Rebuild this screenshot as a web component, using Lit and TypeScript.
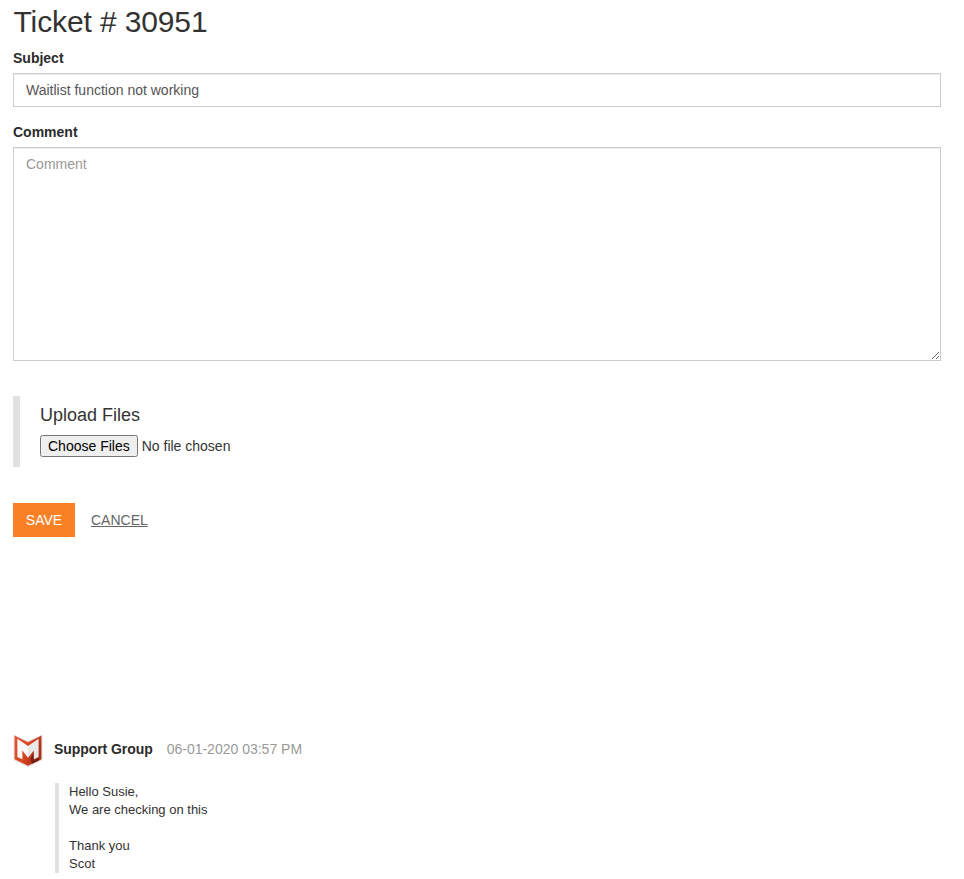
import { LitElement, html, css } from "lit";
import { customElement } from "lit/decorators.js";

@customElement("app-root")
export class AppRoot extends LitElement {
  static styles = css`
    :host { display: block; box-sizing: border-box; height: 879px; overflow: hidden; padding: 5px 23px 0 13px; background: #fff; color: #333; font: 14px/20px "Liberation Sans", Arial, sans-serif; }
    * { box-sizing: border-box; }
    h1 { margin: 0 0 10px; padding-left: 0.5px; font-size: 30px; line-height: 33px; font-weight: 400; letter-spacing: -0.12px; }
    label { display: block; font-weight: 700; margin-bottom: 5px; color: #2b2b2b; }
    .control { display: block; width: 100%; margin: 0 0 15px; padding: 6px 12px; border: 1px solid #ccc; border-radius: 0; font: inherit; color: #555; box-shadow: inset 0 1px 1px rgba(0,0,0,.075); outline: none; }
    input.control { height: 34px; }
    textarea.control { height: 214px; margin-bottom: 35px; resize: both; }
    .control::placeholder { color: #999; opacity: 1; }
    .upload { height: 71px; border-left: 7px solid #e1e1e1; padding: 9px 0 0 20px; margin-bottom: 36px; }
    .upload h4 { margin: 0 0 10px; font-size: 18px; line-height: 20px; font-weight: 400; }
    .upload input { display: block; font: inherit; height: 22px; }
    .actions { display: flex; align-items: center; gap: 16px; height: 34px; margin-bottom: 197px; }
    .save { width: 62px; height: 34px; border: 0; padding: 0; background: #f98025; color: #fff; font: inherit; }
    .cancel { color: #666; text-decoration: underline; }
    .head { display: flex; align-items: flex-start; height: 33px; margin-bottom: 16px; line-height: 30px; }
    .logo { width: 30px; height: 33px; margin-right: 11px; }
    .name { font-weight: 700; color: #2b2b2b; margin-right: 14px; letter-spacing: -0.07px; }
    .date { color: #999; }
    .message { margin: 0 0 0 42px; border-left: 4px solid #e1e1e1; padding-left: 10px; font-size: 13px; line-height: 18px; height: 90px; white-space: pre-line; }
  `;
  render() {
    return html`
      <h1>Ticket # 30951</h1>
      <label for="subject">Subject</label>
      <input id="subject" class="control" .value=${"Waitlist function not working"} />
      <label for="comment">Comment</label>
      <textarea id="comment" class="control" placeholder="Comment"></textarea>
      <section class="upload"><h4>Upload Files</h4><input type="file" multiple /></section>
      <div class="actions"><button class="save">SAVE</button><a class="cancel">CANCEL</a></div>
      <div class="head">
        <svg class="logo" viewBox="0 0 30 33" aria-hidden="true">
          <defs>
            <linearGradient id="frame" x1="0" y1="0" x2="1" y2="0.5">
              <stop offset="0" stop-color="#e5532f" />
              <stop offset="0.55" stop-color="#d94724" />
              <stop offset="1" stop-color="#a82f17" />
            </linearGradient>
          </defs>
          <path d="M1.2 1.3L15 7.8L28.8 1.3V25.5L15 32.3L1.2 25.5Z" fill="#e3ddda" stroke="#e3ddda" stroke-width="1.4" stroke-linejoin="round" />
          <path d="M1.6 1.8L15 8.3L28.4 1.8V25.2L15 31.8L1.6 25.2Z" fill="url(#frame)" />
          <path d="M17.5 24.5L21 18V26.5L25.8 23.6V26.4L19 29.8Z" fill="#761e11" />
          <path d="M4.4 4.8L15 12V23.8L9.4 16.5V25.3L4.4 22.9Z" fill="#f8f8f8" />
          <path d="M25.6 4.8L15 12V23.8L20.8 16.5V25.3L25.6 22.9Z" fill="#e8e8e8" />
        </svg>
        <span class="name">Support Group</span><span class="date">06-01-2020 03:57 PM</span>
      </div>
      <div class="message">${"Hello Susie,\nWe are checking on this\n\nThank you\nScot"}</div>`;
  }
}
